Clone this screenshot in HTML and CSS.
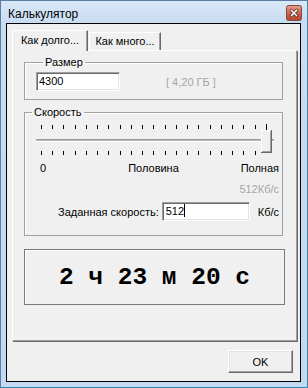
FILE: index.html
```html
<!DOCTYPE html>
<html lang="ru">
<head>
  <meta charset="UTF-8" />
  <title>Калькулятор</title>
  <link rel="stylesheet" href="styles.css">
</head>
<body>
  <div class="window">
    <div class="titlebar">
      <span class="title">Калькулятор</span>
      <svg class="close-btn" width="16" height="16" viewBox="0 0 16 16">
        <defs>
          <linearGradient id="closeGrad" x1="0" y1="0" x2="0" y2="1">
            <stop offset="0" stop-color="#e7a08f"/>
            <stop offset="0.45" stop-color="#d06a54"/>
            <stop offset="1" stop-color="#b9412c"/>
          </linearGradient>
        </defs>
        <rect x="0.5" y="0.5" width="15" height="15" rx="2" fill="url(#closeGrad)" stroke="#7d4a40"/>
        <path d="M5.5 5.5 L10.5 10.5 M10.5 5.5 L5.5 10.5" stroke="#4a1e16" stroke-width="3" stroke-linecap="square"/>
        <path d="M5.5 5.5 L10.5 10.5 M10.5 5.5 L5.5 10.5" stroke="#fff" stroke-width="1.6" stroke-linecap="square"/>
      </svg>
    </div>

    <div class="client">
      <div class="tabs">
        <div class="tab active">Как долго...</div>
        <div class="tab">Как много...</div>
      </div>

      <div class="panel">
        <fieldset class="group size-group">
          <legend>Размер</legend>
          <div class="size-row">
            <div class="field size-field">4300</div>
            <span class="hint">[ 4,20 ГБ ]</span>
          </div>
        </fieldset>

        <fieldset class="group speed-group">
          <legend>Скорость</legend>
          <svg class="slider" width="257" height="34" viewBox="0 0 257 34" shape-rendering="crispEdges">
            <g fill="#000">
              <rect x="16" y="3" width="1" height="4"/><rect x="27" y="3" width="1" height="4"/>
              <rect x="38" y="3" width="1" height="4"/><rect x="50" y="3" width="1" height="4"/>
              <rect x="61" y="3" width="1" height="4"/><rect x="72" y="3" width="1" height="4"/>
              <rect x="83" y="3" width="1" height="4"/><rect x="95" y="3" width="1" height="4"/>
              <rect x="106" y="3" width="1" height="4"/><rect x="117" y="3" width="1" height="4"/>
              <rect x="128" y="3" width="1" height="4"/><rect x="140" y="3" width="1" height="4"/>
              <rect x="151" y="3" width="1" height="4"/><rect x="162" y="3" width="1" height="4"/>
              <rect x="173" y="3" width="1" height="4"/><rect x="185" y="3" width="1" height="4"/>
              <rect x="196" y="3" width="1" height="4"/><rect x="207" y="3" width="1" height="4"/>
              <rect x="218" y="3" width="1" height="4"/><rect x="230" y="3" width="1" height="4"/>
              <rect x="241" y="2" width="1" height="6"/>

              <rect x="16" y="29" width="1" height="4"/><rect x="27" y="29" width="1" height="4"/>
              <rect x="38" y="29" width="1" height="4"/><rect x="50" y="29" width="1" height="4"/>
              <rect x="61" y="29" width="1" height="4"/><rect x="72" y="29" width="1" height="4"/>
              <rect x="83" y="29" width="1" height="4"/><rect x="95" y="29" width="1" height="4"/>
              <rect x="106" y="29" width="1" height="4"/><rect x="117" y="29" width="1" height="4"/>
              <rect x="128" y="29" width="1" height="4"/><rect x="140" y="29" width="1" height="4"/>
              <rect x="151" y="29" width="1" height="4"/><rect x="162" y="29" width="1" height="4"/>
              <rect x="173" y="29" width="1" height="4"/><rect x="185" y="29" width="1" height="4"/>
              <rect x="196" y="29" width="1" height="4"/><rect x="207" y="29" width="1" height="4"/>
              <rect x="218" y="29" width="1" height="4"/><rect x="230" y="29" width="1" height="4"/>
            </g>
            <!-- channel -->
            <rect x="11" y="17" width="238" height="1" fill="#9a9a9a"/>
            <rect x="11" y="18" width="238" height="1" fill="#b9b9b9"/>
            <rect x="11" y="19" width="238" height="1" fill="#ffffff"/>
            <!-- thumb -->
            <rect x="236" y="8" width="11" height="23" fill="#f0f0f0"/>
            <rect x="236" y="8" width="10" height="1" fill="#ffffff"/>
            <rect x="236" y="8" width="1" height="22" fill="#ffffff"/>
            <rect x="245" y="9" width="1" height="21" fill="#a0a0a0"/>
            <rect x="237" y="29" width="9" height="1" fill="#a0a0a0"/>
            <rect x="246" y="8" width="1" height="23" fill="#696969"/>
            <rect x="236" y="30" width="11" height="1" fill="#696969"/>
          </svg>
          <div class="scale-labels">
            <span>0</span>
            <span class="mid">Половина</span>
            <span class="end">Полная</span>
          </div>
          <div class="current">512Кб/с</div>
          <div class="speed-row">
            <span>Заданная скорость:</span>
            <div class="field speed-field">512<span class="caret"></span></div>
            <span class="unit">Кб/с</span>
          </div>
        </fieldset>

        <div class="result">2 ч 23 м 20 с</div>
      </div>

      <div class="buttons">
        <button class="ok-btn">OK</button>
      </div>
    </div>
  </div>
</body>
</html>
```

FILE: styles.css
```css
html, body {
  margin: 0;
  padding: 0;
}

body {
  width: 308px;
  height: 388px;
  overflow: hidden;
  font-family: "Liberation Sans", Arial, sans-serif;
  font-size: 11px;
  color: #000;
}

.window {
  box-sizing: border-box;
  height: 388px;
  display: flex;
  flex-direction: column;
  padding: 0 6px 5px 5px;
  border: 1px solid #5b7ea6;
  border-bottom-color: #2f86a8;
  border-right-color: #3f86a6;
  background: linear-gradient(#dae8f7, #c8dcf2 22px, #c3d9f1);
}

.titlebar {
  height: 22px;
  display: flex;
  justify-content: space-between;
  align-items: flex-start;
}

.title {
  font-size: 12px;
  line-height: 14px;
  margin: 6px 0 0 2px;
}

.close-btn {
  display: block;
  margin-top: 4px;
  margin-right: -1px;
}

.client {
  flex: 1;
  border: 1px solid #000;
  background: #f0f0f0;
  display: flex;
  flex-direction: column;
}

/* tabs */
.tabs {
  display: flex;
  align-items: flex-end;
  margin-top: 6px;
  padding-left: 5px;
  position: relative;
  z-index: 1;
}

.tab {
  box-sizing: border-box;
  height: 18px;
  width: 72px;
  line-height: 17px;
  text-align: center;
  background: #f0f0f0;
  border-top: 1px solid #fff;
  border-left: 1px solid #fff;
  border-right: 1px solid #696969;
  box-shadow: inset -1px 0 0 #a0a0a0;
  margin-left: 1px;
}

.tab.active {
  width: 76px;
  height: 21px;
  line-height: 19px;
  margin-left: 0;
  margin-bottom: -1px;
}

.panel {
  box-sizing: border-box;
  width: 285px;
  height: 291px;
  margin-left: 5px;
  padding-left: 11px;
  border-top: 1px solid #fff;
  border-left: 1px solid #fff;
  border-right: 1px solid #a0a0a0;
  border-bottom: 1px solid #a0a0a0;
  box-shadow: 1px 1px 0 #696969;
}

/* group boxes */
.group {
  box-sizing: border-box;
  width: 259px;
  min-width: 0;
  margin: 0;
  padding: 0;
  border: 1px solid #a0a0a0;
  box-shadow: inset 1px 1px 0 #fff;
}

.group legend {
  margin-left: 7px;
  padding: 0 2px;
  line-height: 14px;
}

.size-group {
  margin-top: 4px;
  padding: 0 0 8px 11px;
}

.size-row {
  display: flex;
  align-items: center;
  margin-top: 3px;
}

.field {
  box-sizing: border-box;
  height: 19px;
  line-height: 17px;
  padding-left: 1px;
  background: #fff;
  border: 1px solid;
  border-color: #a0a0a0 #fff #fff #a0a0a0;
  box-shadow: inset 1px 1px 0 #696969, inset -1px -1px 0 #e3e3e3;
}

.size-field {
  width: 84px;
  padding-left: 2px;
}

.hint {
  margin-left: 46px;
  color: #a6a6a6;
}

.speed-group {
  margin-top: 5px;
  padding: 0 3px 14px 0;
}

.slider {
  display: block;
  margin-top: 3px;
}

.scale-labels {
  display: grid;
  grid-template-columns: 70px 87px 1fr;
  margin-top: 5px;
  padding-left: 15px;
  line-height: 14px;
}

.scale-labels .mid {
  text-align: center;
}

.scale-labels .end {
  text-align: right;
}

.current {
  margin-top: 7px;
  line-height: 14px;
  text-align: right;
  color: #a6a6a6;
}

.speed-row {
  display: flex;
  justify-content: flex-end;
  align-items: center;
  margin-top: 6px;
}

.speed-field {
  width: 88px;
  margin-left: 3px;
  padding-left: 3px;
}

.caret {
  display: inline-block;
  width: 1px;
  height: 13px;
  background: #000;
  vertical-align: -2px;
}

.unit {
  margin-left: 8px;
}

.result {
  box-sizing: border-box;
  width: 261px;
  height: 56px;
  margin-top: 13px;
  border: 1px solid #7a7a7a;
  box-shadow: inset 1px 1px 0 #fff;
  display: flex;
  align-items: center;
  justify-content: center;
  font-family: "Liberation Mono", "Courier New", monospace;
  font-weight: bold;
  font-size: 24.5px;
  white-space: pre;
}

/* bottom button */
.buttons {
  display: flex;
  justify-content: flex-end;
  margin-top: 9px;
  padding-right: 7px;
}

.ok-btn {
  box-sizing: border-box;
  width: 65px;
  height: 23px;
  padding: 0;
  font-family: "Liberation Sans", Arial, sans-serif;
  font-size: 11px;
  color: #000;
  background: #f0f0f0;
  border: 1px solid;
  border-color: #fff #696969 #696969 #fff;
  box-shadow: inset -1px -1px 0 #a0a0a0, inset 1px 1px 0 #e3e3e3;
}
```
